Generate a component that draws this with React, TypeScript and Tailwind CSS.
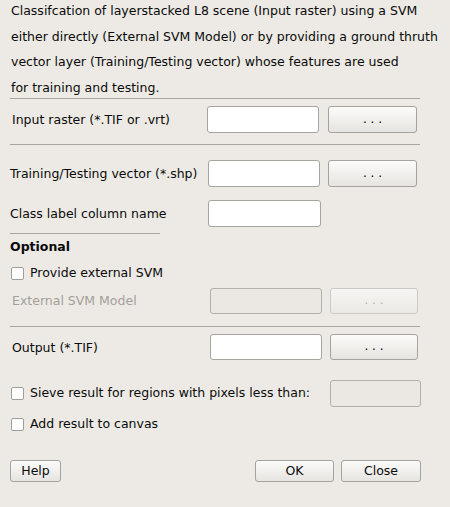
const font = { fontFamily: '"DejaVu Sans", "Liberation Sans", sans-serif' };

function Field({ w, disabled = false }: { w: string; disabled?: boolean }) {
  return (
    <div
      className={
        "h-full rounded-[3px] border " +
        w +
        (disabled ? " border-[#b3b0ab] bg-[#ebe8e3]" : " border-[#a7a49f] bg-white")
      }
    />
  );
}

function Browse({ w, disabled = false }: { w: string; disabled?: boolean }) {
  return (
    <button
      className={
        "flex h-full items-center justify-center rounded-[3px] border bg-gradient-to-b pb-[2px] text-[12px] " +
        w +
        (disabled
          ? " border-[#cdcac5] from-[#f6f5f3] to-[#ebe9e6] text-[#b5b2ad]"
          : " border-[#a6a39e] from-[#fbfbfa] to-[#e6e4e0] text-black")
      }
    >
      . . .
    </button>
  );
}

function Check({ label }: { label: string }) {
  return (
    <div className="flex h-[16px] items-center">
      <div className="ml-[1px] h-[13px] w-[13px] rounded-[2px] border border-[#a19e99] bg-white" />
      <span className="ml-[6px]">{label}</span>
    </div>
  );
}

function Sep({ w = "w-[410px]" }: { w?: string }) {
  return <div className={"h-px bg-[#a9a6a1] " + w} />;
}

export default function App() {
  return (
    <div
      className="flex h-[507px] w-[450px] flex-col overflow-hidden bg-[#edeae5] pl-[10px] text-[12.5px] text-[#0a0a0a]"
      style={font}
    >
      <div className="flex h-[98px] flex-col">
        <p className="ml-[1px] mt-[-2px] leading-[25.7px]">
          Classifcation of layerstacked L8 scene (Input raster) using a SVM
          <br />
          either directly (External SVM Model) or by providing a ground thruth
          <br />
          vector layer (Training/Testing vector) whose features are used
          <br />
          for training and testing.
        </p>
      </div>
      <Sep />

      {/* input raster */}
      <div className="mt-[7px] flex h-[27px] items-center">
        <span className="ml-[2px] w-[195px] pt-[2px]">Input raster (*.TIF or .vrt)</span>
        <Field w="w-[112px]" />
        <div className="w-[9px]" />
        <Browse w="w-[89px]" />
      </div>
      <div className="mt-[11px]">
        <Sep />
      </div>

      {/* training */}
      <div className="mt-[15px] flex h-[27px] items-center">
        <span className="w-[198px] pt-[2px]">Training/Testing vector (*.shp)</span>
        <Field w="w-[112px]" />
        <div className="w-[8px]" />
        <Browse w="w-[89px]" />
      </div>
      <div className="mt-[13px] flex h-[27px] items-center">
        <span className="w-[198px] pt-[2px]">Class label column name</span>
        <Field w="w-[113px]" />
      </div>
      <div className="mt-[6px]">
        <Sep w="w-[150px]" />
      </div>

      <div className="mt-[5px] flex h-[16px] items-center font-bold">Optional</div>
      <div className="mt-[10px]">
        <Check label="Provide external SVM" />
      </div>
      <div className="mt-[7px] flex h-[26px] items-center">
        <span className="ml-[2px] w-[198px] text-[#a3a09b]">External SVM Model</span>
        <Field w="w-[112px]" disabled />
        <div className="w-[8px]" />
        <Browse w="w-[88px]" disabled />
      </div>
      <div className="mt-[12px]">
        <Sep />
      </div>

      {/* output */}
      <div className="mt-[7px] flex h-[26px] items-center">
        <span className="ml-[2px] w-[198px] pt-[2px]">Output (*.TIF)</span>
        <Field w="w-[112px]" />
        <div className="w-[8px]" />
        <Browse w="w-[88px]" />
      </div>

      <div className="mt-[20px] flex h-[27px] items-center">
        <div className="w-[320px]">
          <Check label="Sieve result for regions with pixels less than:" />
        </div>
        <Field w="w-[91px]" disabled />
      </div>
      <div className="mt-[9px]">
        <Check label="Add result to canvas" />
      </div>

      <div className="mt-[28px] flex h-[22px] w-[411px] items-stretch">
        <button className="w-[51px] rounded-[3px] border border-[#a6a39e] bg-gradient-to-b from-[#fbfbfa] to-[#e6e4e0]">
          Help
        </button>
        <div className="flex-1" />
        <button className="w-[79px] rounded-[3px] border border-[#a6a39e] bg-gradient-to-b from-[#fbfbfa] to-[#e6e4e0]">
          OK
        </button>
        <div className="w-[7px]" />
        <button className="w-[80px] rounded-[3px] border border-[#a6a39e] bg-gradient-to-b from-[#fbfbfa] to-[#e6e4e0]">
          Close
        </button>
      </div>
    </div>
  );
}
